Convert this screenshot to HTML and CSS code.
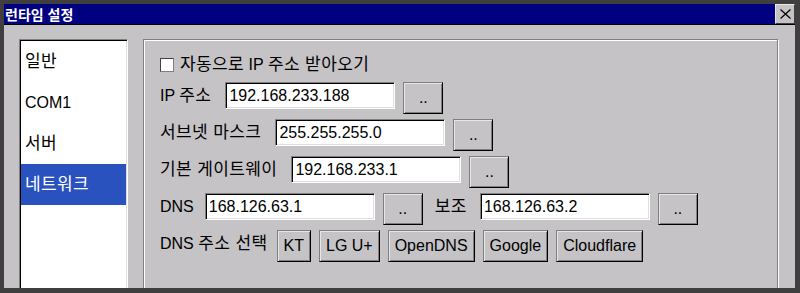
FILE: index.html
```html
<!DOCTYPE html>
<html lang="ko">
<head>
    <meta charset="UTF-8">
    <title>런타임 설정</title>
    <link rel="stylesheet" href="styles.css">
</head>
<body>
<div class="window">
    <div class="titlebar">
        <span class="title">런타임 설정</span>
        <button class="close" type="button">
            <svg width="11" height="10" viewBox="0 0 11 10"><path d="M0.5 0.5 L10.5 9.5 M10.5 0.5 L0.5 9.5" stroke="#000" stroke-width="1.2" fill="none"/></svg>
        </button>
    </div>
    <div class="content">
        <ul class="listbox">
            <li><span class="ko">일반</span></li>
            <li>COM1</li>
            <li><span class="ko">서버</span></li>
            <li class="selected"><span class="ko">네트워크</span></li>
        </ul>
        <div class="panel">
            <div class="row check-row">
                <span class="checkbox"></span>
                <span class="label"><span class="ko">자동으로</span> IP <span class="ko">주소 받아오기</span></span>
            </div>
            <div class="row">
                <span class="label">IP <span class="ko">주소</span></span>
                <input class="field" type="text" value="192.168.233.188">
                <button class="btn dots" type="button">..</button>
            </div>
            <div class="row">
                <span class="label ko">서브넷 마스크</span>
                <input class="field" type="text" value="255.255.255.0">
                <button class="btn dots" type="button">..</button>
            </div>
            <div class="row">
                <span class="label ko">기본 게이트웨이</span>
                <input class="field" type="text" value="192.168.233.1">
                <button class="btn dots" type="button">..</button>
            </div>
            <div class="row">
                <span class="label dns">DNS</span>
                <input class="field" type="text" value="168.126.63.1">
                <button class="btn dots" type="button">..</button>
                <span class="label ko sub">보조</span>
                <input class="field" type="text" value="168.126.63.2">
                <button class="btn dots" type="button">..</button>
            </div>
            <div class="row presets">
                <span class="label">DNS <span class="ko">주소 선택</span></span>
                <button class="btn" type="button">KT</button>
                <button class="btn" type="button">LG U+</button>
                <button class="btn" type="button">OpenDNS</button>
                <button class="btn" type="button">Google</button>
                <button class="btn" type="button">Cloudflare</button>
            </div>
        </div>
    </div>
</div>
</body>
</html>
```

FILE: styles.css
```css
body {
    margin: 0;
    background-color: #3f3f3f;
    font-family: "Liberation Sans", "Noto Sans CJK KR", sans-serif;
    font-size: 16px;
    color: #000;
}

.ko {
    font-size: 17px;
    letter-spacing: 0.4px;
}

.window {
    height: 293px;
    box-sizing: border-box;
    padding: 4px 5px 5px 4px;
    display: flex;
    flex-direction: column;
}

.titlebar {
    height: 20px;
    background-color: #000080;
    border-bottom: 1px solid #000;
    display: flex;
    align-items: center;
    justify-content: space-between;
    flex-shrink: 0;
}

.title {
    color: #fff;
    font-size: 14px;
    font-weight: bold;
    padding-left: 1px;
}

.close {
    width: 20px;
    height: 20px;
    padding: 0;
    background-color: #c5c3c6;
    border: 1px solid;
    border-color: #e8e8e8 #404040 #404040 #e8e8e8;
    display: flex;
    align-items: center;
    justify-content: center;
}

.content {
    flex: 1;
    background-color: #c5c3c6;
    overflow: hidden;
    display: flex;
    gap: 15px;
    padding: 14px 17px 0 15px;
}

.listbox {
    list-style: none;
    margin: 0;
    padding: 1px;
    width: 109px;
    height: 300px;
    box-sizing: border-box;
    flex-shrink: 0;
    background-color: #fff;
    border: 1px solid;
    border-color: #808080 #fff #fff #808080;
    box-shadow: inset 1px 1px #000, inset -1px -1px #dfdfdf;
}

.listbox li {
    height: 41px;
    line-height: 41px;
    padding-left: 4px;
}

.listbox li.selected {
    background-color: #2a52be;
    color: #fff;
}

.panel {
    flex: 1;
    height: 300px;
    box-sizing: border-box;
    border: 1px solid #808080;
    box-shadow: inset 1px 1px #fff, 1px 1px #fff;
    padding: 11px 16px 0 16px;
    display: flex;
    flex-direction: column;
    gap: 5px;
}

.row {
    display: flex;
    align-items: flex-start;
    height: 32px;
}

.check-row {
    height: 27px;
    align-items: center;
    margin-bottom: -1px;
}

.label {
    line-height: 27px;
    margin-right: 14px;
    white-space: nowrap;
}

.check-row .label {
    margin-right: 0;
}

.label.dns {
    margin-right: 11px;
}

.label.sub {
    margin-left: 2px;
    margin-right: 13px;
}

.checkbox {
    width: 14px;
    height: 14px;
    box-sizing: border-box;
    background-color: #fff;
    border: 1px solid;
    border-color: #404040 #808080 #808080 #404040;
    margin-right: 6px;
}

.field {
    width: 170px;
    height: 27px;
    box-sizing: border-box;
    margin: 0 8px 0 0;
    padding: 0 0 0 3px;
    font: inherit;
    background-color: #fff;
    border: 1px solid;
    border-color: #808080 #fff #fff #808080;
    box-shadow: inset 1px 1px #000, inset -1px -1px #dfdfdf;
    outline: none;
}

.btn {
    height: 32px;
    box-sizing: border-box;
    margin: 0;
    padding: 0 6px;
    font: inherit;
    color: #000;
    background-color: #c5c3c6;
    border: 1px solid;
    border-color: #7f7f7f #000 #000 #7f7f7f;
    box-shadow: inset 1px 1px #e6e6e6, inset -1px -1px #7f7f7f;
}

.btn.dots {
    width: 40px;
    margin-right: 10px;
}

.presets {
    gap: 8px;
}

.presets .label {
    margin-right: 1px;
}
```
